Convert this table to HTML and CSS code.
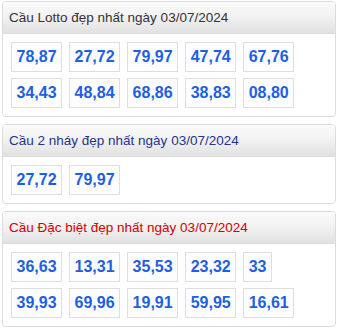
FILE: index.html
```html
<!DOCTYPE html>
<html lang="vi">
<head>
<meta charset="utf-8">
<link rel="stylesheet" href="styles.css">
</head>
<body>
<div class="card">
  <div class="card-head head-dark">Cầu Lotto đẹp nhất ngày 03/07/2024</div>
  <div class="card-body">
    <div class="row"><span class="num">78,87</span><span class="num">27,72</span><span class="num">79,97</span><span class="num">47,74</span><span class="num">67,76</span></div>
    <div class="row"><span class="num">34,43</span><span class="num">48,84</span><span class="num">68,86</span><span class="num">38,83</span><span class="num">08,80</span></div>
  </div>
</div>
<div class="card">
  <div class="card-head head-navy">Cầu 2 nháy đẹp nhất ngày 03/07/2024</div>
  <div class="card-body">
    <div class="row"><span class="num">27,72</span><span class="num">79,97</span></div>
  </div>
</div>
<div class="card">
  <div class="card-head head-red">Cầu Đặc biệt đẹp nhất ngày 03/07/2024</div>
  <div class="card-body">
    <div class="row"><span class="num">36,63</span><span class="num">13,31</span><span class="num">35,53</span><span class="num">23,32</span><span class="num">33</span></div>
    <div class="row"><span class="num">39,93</span><span class="num">69,96</span><span class="num">19,91</span><span class="num">59,95</span><span class="num">16,61</span></div>
  </div>
</div>
</body>
</html>
```
FILE: styles.css
```css
html, body {
  background: #fff;
}
body {
  margin: 1px 2px;
  font-family: "Liberation Sans", Arial, sans-serif;
}
.card {
  border: 1px solid #dcdcdc;
  border-radius: 4px;
  margin-bottom: 7px;
  overflow: hidden;
  background: #fff;
}
.card-head {
  height: 31px;
  line-height: 31px;
  padding-left: 6px;
  font-size: 13.5px;
  border-bottom: 1px solid #dcdcdc;
  background: linear-gradient(to bottom, #fbfbfb 0%, #f1f1f1 50%, #e1e1e1 100%);
  white-space: nowrap;
}
.head-dark { color: #333; }
.head-navy { color: #25338d; }
.head-red { color: #d40000; }
.card-body {
  display: flex;
  flex-direction: column;
  gap: 6px;
  padding: 8px;
}
.row {
  display: flex;
  gap: 7px;
}
.num {
  display: block;
  height: 28px;
  line-height: 28px;
  padding: 0 4.5px;
  border: 1px solid #dedede;
  background: #fdfdfd;
  color: #1d5fe4;
  font-weight: bold;
  font-size: 16px;
}
```
